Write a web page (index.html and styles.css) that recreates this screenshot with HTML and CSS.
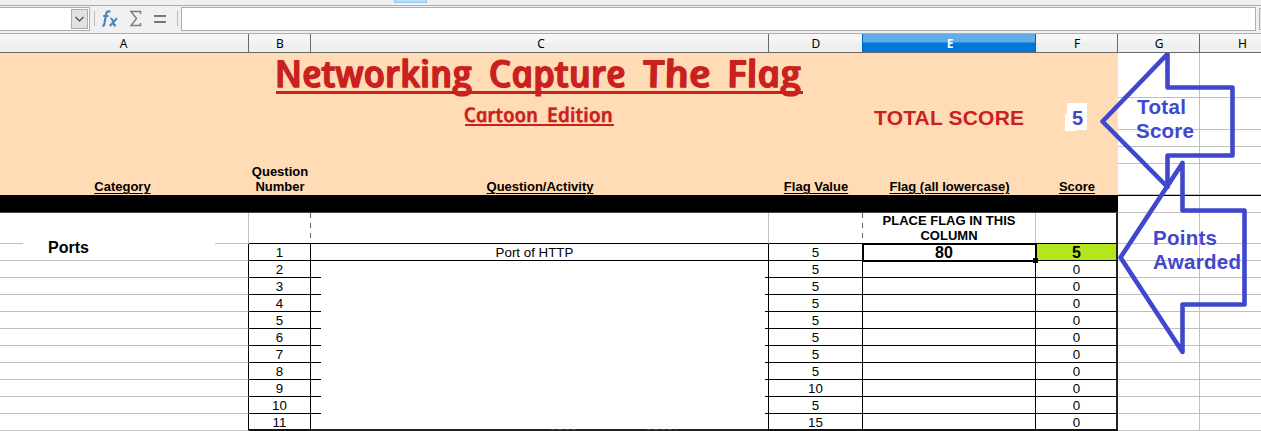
FILE: index.html
```html
<!DOCTYPE html>
<html lang="en">
<head>
<meta charset="utf-8">
<title>Networking Capture The Flag</title>
<link rel="stylesheet" href="styles.css">
</head>
<body>
<div class="app">
  <div class="toolbar"><span class="toolbar-active"></span></div>
  <div class="formula-bar">
    <div class="name-box"><span class="drop"><svg width="15" height="18" viewBox="0 0 15 18"><path d="M3.5 7l4 4 4-4" fill="none" stroke="#444" stroke-width="1.2"/></svg></span></div>
    <svg class="tools" width="88" height="24" viewBox="0 0 88 24">
      <path d="M1.500 4v15M84.500 4v15" stroke="#bcbcbc"/>
      <path d="M17.300 4.600c-3-.8-3.800.4-4.200 2.400l-1.600 9.500c-.3 1.500-.8 2.500-2.200 2.200M10.200 9h5.300" fill="none" stroke="#4a86be" stroke-width="2.200"/>
      <path d="M17.300 11.500c2-.5 2 1 2.700 3.500s1 4 3 3.500M24 11.300l-7.200 7.700" fill="none" stroke="#4a86be" stroke-width="2"/>
      <path d="M47.500 7V4.600H38l5.500 7L38 18.500h9.500V16" fill="none" stroke="#7d7d7d" stroke-width="1.500"/>
      <path d="M61 9h12M61 15h12" stroke="#777" stroke-width="2"/>
    </svg>
    <div class="input-line"></div>
    <div class="expand"></div>
  </div>
  <div class="col-heads">
    <div class="a">A</div><div class="b">B</div><div class="c">C</div><div class="d">D</div><div class="e picked">E</div><div class="f">F</div><div class="g">G</div><div class="h">H</div>
  </div>
  <div class="sheet">
    <div class="main">
      <div class="banner">
        <svg class="titles" width="1118" height="80" viewBox="0 53 1118 80">
          <g class="comic big">
            <text transform="translate(277 86.500) skewX(12)" textLength="197" lengthAdjust="spacingAndGlyphs">Networking</text>
            <text transform="translate(491 86.500) skewX(12)" textLength="137" lengthAdjust="spacingAndGlyphs">Capture</text>
            <text transform="translate(645 86.500) skewX(12)" textLength="68" lengthAdjust="spacingAndGlyphs">The</text>
            <text transform="translate(729 86.500) skewX(12)" textLength="74" lengthAdjust="spacingAndGlyphs">Flag</text>
          </g>
          <path d="M276 92.500h527" stroke="#c9211e" stroke-width="3"/>
          <g class="comic small">
            <text transform="translate(465 121.500) skewX(12)" textLength="74" lengthAdjust="spacingAndGlyphs">Cartoon</text>
            <text transform="translate(548 121.500) skewX(12)" textLength="66" lengthAdjust="spacingAndGlyphs">Edition</text>
          </g>
          <path d="M465 125h149" stroke="#c9211e" stroke-width="2"/>
          <text class="total" x="874" y="125" textLength="150">TOTAL SCORE</text>
          <path d="M1067 103h20v27h-11v1h-11v-17h2z" fill="#fff"/>
          <text class="score" x="1072" y="125">5</text>
        </svg>
        <div class="labels">
          <div class="a"><u>Category</u></div><div class="b">Question Number</div><div class="c"><u>Question/Activity</u></div><div class="d"><u>Flag Value</u></div><div class="e"><u>Flag (all lowercase)</u></div><div class="f"><u>Score</u></div>
        </div>
      </div>
      <div class="divider"></div>
      <div class="row intro"><div class="a"></div><div class="b"></div><div class="c"></div><div class="d"></div><div class="e">PLACE FLAG IN THIS COLUMN</div><div class="f"></div></div>
      <div class="row first"><div class="a"><b class="ports">Ports</b></div><div class="b">1</div><div class="c">Port of HTTP</div><div class="d">5</div><div class="e"><b>80</b><i class="cursor"></i></div><div class="f"><b>5</b></div></div>
      <div class="row"><div class="a"></div><div class="b">2</div><div class="c"></div><div class="d">5</div><div class="e"></div><div class="f">0</div></div>
      <div class="row"><div class="a"></div><div class="b">3</div><div class="c"></div><div class="d">5</div><div class="e"></div><div class="f">0</div></div>
      <div class="row"><div class="a"></div><div class="b">4</div><div class="c"></div><div class="d">5</div><div class="e"></div><div class="f">0</div></div>
      <div class="row"><div class="a"></div><div class="b">5</div><div class="c"></div><div class="d">5</div><div class="e"></div><div class="f">0</div></div>
      <div class="row"><div class="a"></div><div class="b">6</div><div class="c"></div><div class="d">5</div><div class="e"></div><div class="f">0</div></div>
      <div class="row"><div class="a"></div><div class="b">7</div><div class="c"></div><div class="d">5</div><div class="e"></div><div class="f">0</div></div>
      <div class="row"><div class="a"></div><div class="b">8</div><div class="c"></div><div class="d">5</div><div class="e"></div><div class="f">0</div></div>
      <div class="row"><div class="a"></div><div class="b">9</div><div class="c"></div><div class="d">10</div><div class="e"></div><div class="f">0</div></div>
      <div class="row"><div class="a"></div><div class="b">10</div><div class="c"></div><div class="d">5</div><div class="e"></div><div class="f">0</div></div>
      <div class="row last"><div class="a"></div><div class="b">11</div><div class="c"></div><div class="d">15</div><div class="e"></div><div class="f">0</div></div>
    </div>
    <div class="side">
      <div></div><div></div><div></div><div></div><div></div><div class="rule"></div><div></div><div></div>
      <div></div><div></div><div></div><div></div><div></div><div></div><div></div><div></div><div></div><div></div><div></div>
    </div>
  </div>
  <svg class="arrows" width="181" height="378" viewBox="1080 53 181 378">
    <g fill="none" stroke="#3f48cc" stroke-width="4.600" stroke-linejoin="round">
      <path d="M1167.500 54v33.500h65V155.500h-65V187L1102.500 121.500z"/>
      <path d="M1182.500 163v47.500h62V304.500h-62V352L1120.500 257.500z"/>
    </g>
    <text x="1137" y="114" textLength="49">Total</text>
    <text x="1136" y="138" textLength="58">Score</text>
    <text x="1153" y="245" textLength="64">Points</text>
    <text x="1153" y="269" textLength="88">Awarded</text>
  </svg>
</div>
</body>
</html>
```
FILE: styles.css
```css
* { box-sizing: border-box; }
body { margin: 0; background: #fff; }
.app {
  position: relative;
  width: 1261px;
  height: 431px;
  overflow: hidden;
  font-family: "Liberation Sans", Arial, sans-serif;
  font-size: 13.33px;
  color: #000;
}
.toolbar {
  height: 6px;
  padding-left: 394px;
  background: #f0f0f0;
  border-bottom: 1px solid #adadad;
}
.toolbar-active {
  display: block;
  width: 33px;
  height: 3px;
  background: #bcdcf4;
  border: 1px solid #90c8f6;
  border-top: 0;
}
.formula-bar {
  display: flex;
  height: 28px;
  padding-top: 1px;
  background: #f0f0f0;
  border-bottom: 1px solid #adadad;
}
.formula-bar > * { flex: none; }
.name-box {
  display: flex;
  justify-content: flex-end;
  width: 90px;
  height: 24px;
  padding: 1px;
  background: #fff;
  border: 1px solid #abadb3;
  border-left: 0;
}
.drop { width: 17px; height: 20px; background: #e1e1e1; border: 1px solid #adadad; }
.drop svg { display: block; }
.tools { margin: 0 0 0 3px; }
.input-line { width: 1075px; height: 24px; background: #fff; border: 1px solid #abadb3; }
.expand { width: 6px; height: 22px; margin: 1px 0 0 3px; background: #e7e7e7; border: 1px solid #adadad; }

.col-heads, .labels, .row { display: flex; }
.a { width: 249px; }
.b { width: 62px; }
.c { width: 458px; }
.d { width: 94px; }
.e { width: 173px; }
.f { width: 82px; }
.g { width: 82px; }
.h { width: 85px; }
.col-heads > div, .row > div { flex: none; text-align: center; }
.col-heads {
  height: 19px;
  overflow: hidden;
  border-bottom: 1px solid #696969;
  background: linear-gradient(#f7f7f7 0, #f4f4f4 45%, #efefef 55%);
  font: 12px/19px "Noto Sans", sans-serif;
}
.col-heads > div { padding-left: 1px; border-right: 1px solid #696969; }
.col-heads > .a { padding: 0 1px 0 0; }
.col-heads > .c { padding-left: 3px; }
.col-heads > .picked {
  margin-left: -1px;
  width: 174px;
  padding-left: 2px;
  color: #fff;
  font-weight: bold;
  border: 1px solid #0068bf;
  border-width: 0 1px;
  background: linear-gradient(#62ade9 0 8px, #2f8fdf 8px 9px, #0078d7 9px);
}
.sheet { display: flex; }
.main { flex: none; width: 1118px; }
.banner {
  display: flex;
  flex-direction: column;
  justify-content: space-between;
  height: 142px;
  padding-bottom: 1px;
  background: #ffdbb6;
}
.titles { display: block; overflow: visible; }
.comic {
  fill: #c9211e;
  stroke: #c9211e;
  stroke-linejoin: round;
  font-family: "Open Sans", "Noto Sans", sans-serif;
  font-style: italic;
  font-weight: 600;
}
.big { font-size: 37px; stroke-width: 1.4px; }
.small { font-size: 20px; stroke-width: .5px; }
.total { font-size: 21px; font-weight: bold; fill: #c9211e; }
.score { font-size: 20px; font-weight: bold; fill: #3f48cc; }
.labels {
  align-items: flex-end;
  font-size: 13px;
  font-weight: bold;
  line-height: 15px;
  text-align: center;
}
.labels > .a { padding-right: 4px; }
.labels u { text-decoration-thickness: 1px; text-underline-offset: 2px; }
.divider { height: 18px; background: #000; border-bottom: 1px solid #444; }

.row { height: 17px; }
.row > div {
  height: 17px;
  line-height: 17px;
  border-right: 1px solid #000;
  border-bottom: 1px solid #000;
}
.row > .a { border-bottom-color: #c0c0c0; }
.row > .f { padding-left: 1px; border-right: 2px solid #222; }
.row > .c {
  border-bottom: 0;
  background:
    linear-gradient(#000, #000) 0 100% / 10px 1px no-repeat,
    linear-gradient(#000, #000) 100% 100% / 3px 1px no-repeat;
}
.row.intro, .row.intro > div { height: 31px; }
.row.intro > div { border-right-color: #c0c0c0; }
.row.intro > .a {
  border-bottom: 0;
  background:
    linear-gradient(#c0c0c0, #c0c0c0) 0 100% / 23px 1px no-repeat,
    linear-gradient(#c0c0c0, #c0c0c0) 100% 100% / 33px 1px no-repeat;
}
.row.intro > .b, .row.intro > .d {
  border-right: 0;
  background: repeating-linear-gradient(#666 0 5px, transparent 5px 10px) 100% 0 / 1px 25px no-repeat;
}
.row.intro > .c, .row.first > .c { background: none; border-bottom: 1px solid #000; }
.row.intro > .e { font-size: 13px; font-weight: bold; line-height: 15px; }
.row.intro > .f { border-right-color: #222; }
.row.first > .c { padding-right: 10px; }
.row.first > .e { position: relative; padding-right: 10px; font-size: 16px; line-height: 18px; }
.row.first > .f { background: #b5e61d; font-size: 16px; line-height: 18px; }
.row.first > .a { position: relative; }
.ports { position: absolute; left: 48px; top: -5px; font-size: 16px; }
.cursor { position: absolute; inset: -1px -2px -2px -1px; border: 2px solid #000; }
.cursor::after { content: ""; position: absolute; right: -3px; bottom: -3px; width: 5px; height: 5px; background: #000; }
.row.last > div { border-bottom-width: 2px; border-bottom-color: #111; }
.row.last > .a { border-bottom-width: 1px; border-bottom-color: #c0c0c0; }
.row.last > .c {
  border-bottom: 0;
  background:
    repeating-linear-gradient(90deg, #f00 0 4px, transparent 4px 7px) 240px 15px / 26px 1px no-repeat,
    repeating-linear-gradient(90deg, #f00 0 4px, transparent 4px 7px) 336px 15px / 30px 1px no-repeat,
    linear-gradient(#222, #222) 0 100% / 100% 2px no-repeat;
}
.side {
  flex: none;
  display: grid;
  grid-template-rows: 45px 32px 17px 17px 31px 1px 17px 31px repeat(11, 17px);
  width: 143px;
  background: linear-gradient(#c0c0c0, #c0c0c0) 81px 0 / 1px 100% no-repeat;
}
.side > div { border-bottom: 1px solid #c0c0c0; }
.side > .rule { border-bottom-color: #000; }
.arrows { position: absolute; left: 1080px; top: 53px; font-size: 20.5px; font-weight: bold; fill: #3f48cc; }
```
